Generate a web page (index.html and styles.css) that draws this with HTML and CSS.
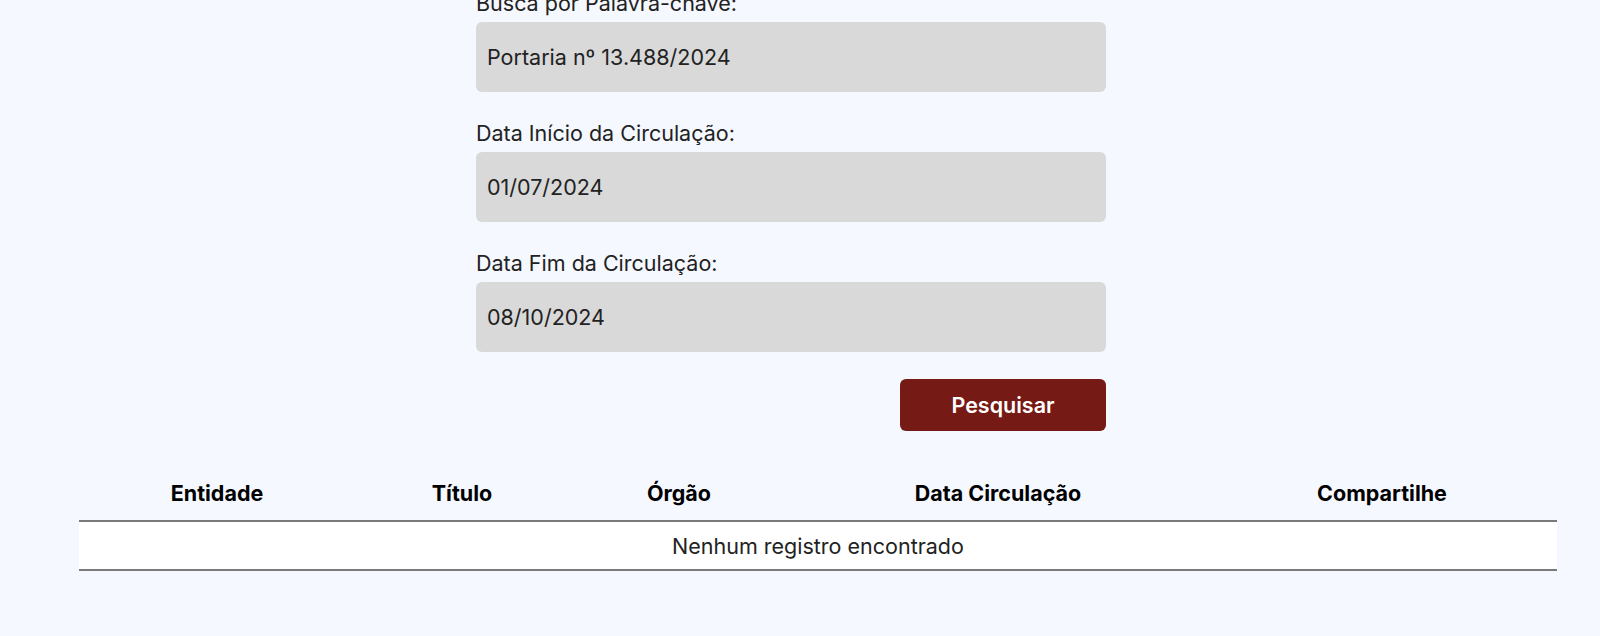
FILE: index.html
```html
<!DOCTYPE html>
<html lang="pt-BR">
<head>
<meta charset="utf-8">
<title>Busca</title>
<link rel="stylesheet" href="styles.css">
</head>
<body>
<main class="page">
  <form class="search-form">
    <div class="field">
      <label class="field-label">Busca por Palavra-chave:</label>
      <div class="field-input">Portaria nº 13.488/2024</div>
    </div>
    <div class="field">
      <label class="field-label">Data Início da Circulação:</label>
      <div class="field-input">01/07/2024</div>
    </div>
    <div class="field">
      <label class="field-label">Data Fim da Circulação:</label>
      <div class="field-input">08/10/2024</div>
    </div>
    <div class="actions">
      <button type="button" class="btn-search">Pesquisar</button>
    </div>
  </form>

  <table class="results">
    <colgroup>
      <col class="c1"><col class="c2"><col class="c3"><col class="c4"><col class="c5">
    </colgroup>
    <thead>
      <tr>
        <th>Entidade</th>
        <th>Título</th>
        <th>Órgão</th>
        <th>Data Circulação</th>
        <th>Compartilhe</th>
      </tr>
    </thead>
    <tbody>
      <tr>
        <td colspan="5">Nenhum registro encontrado</td>
      </tr>
    </tbody>
  </table>
</main>
</body>
</html>
```

FILE: styles.css
```css
html, body {
  margin: 0;
  padding: 0;
  background: #f5f8ff;
  font-family: Inter, "Noto Sans", sans-serif;
  color: #1f1f1f;
}

.page {
  padding: 0 43px 0 79px;
}

.search-form {
  width: 630px;
  margin: -10px 0 0 397px;
  display: flex;
  flex-direction: column;
  gap: 28px;
}

.field {
  display: flex;
  flex-direction: column;
  gap: 6px;
}

.field-label {
  font-size: 21.5px;
  line-height: 26px;
  font-weight: 400;
  color: #222;
}

.field-input {
  height: 70px;
  box-sizing: border-box;
  background: #d9d9d9;
  border-radius: 6px;
  padding: 0 11px;
  display: flex;
  align-items: center;
  font-size: 21.5px;
  color: #222;
}

.actions {
  display: flex;
  justify-content: flex-end;
  margin-top: -1px;
}

.btn-search {
  width: 206px;
  height: 52px;
  border: none;
  border-radius: 6px;
  background: #751a14;
  color: #fff;
  font-family: inherit;
  font-size: 21.5px;
  font-weight: 600;
}

.results {
  width: 1478px;
  margin-top: 33px;
  border-collapse: collapse;
  table-layout: fixed;
}

.c1 { width: 276px; }
.c2 { width: 214px; }
.c3 { width: 220px; }
.c4 { width: 418px; }
.c5 { width: 350px; }

.results th {
  font-size: 21.5px;
  font-weight: 700;
  color: #000;
  line-height: 26px;
  padding: 16px 0 14px;
  text-align: center;
  border-bottom: 2px solid #7a7a7a;
}

.results td {
  background: #fff;
  text-align: center;
  font-size: 21.5px;
  line-height: 26px;
  padding: 11px 0 10px;
  color: #222;
  border-bottom: 2px solid #7a7a7a;
}
```
